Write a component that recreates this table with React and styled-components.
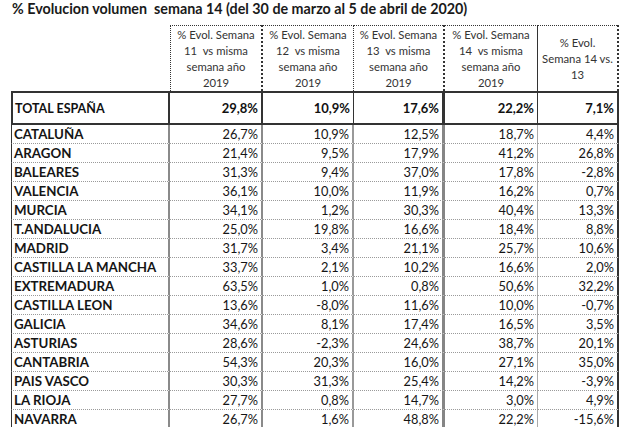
import React from "react";
import styled, { createGlobalStyle } from "styled-components";

const Global = createGlobalStyle`
  html, body { margin: 0; padding: 0; background: #fff; }
  body { width: 636px; height: 427px; overflow: hidden; font-family: Lato, "Open Sans", sans-serif; color: #111; }
`;

const Page = styled.div`
  width: 636px;
  height: 427px;
  overflow: hidden;
  background: #fff;
`;

const Title = styled.h1`
  margin: 0;
  padding: 0 0 0 12px;
  height: 25px;
  box-sizing: border-box;
  font-family: Lato, sans-serif;
  font-weight: 700;
  font-size: 14.3px;
  line-height: 18px;
  color: #1a1a1a;
  white-space: pre;
`;

const Grid = styled.div`
  display: grid;
  grid-template-columns: 159px 93px 91px 91px 93px 81px;
  margin-left: 11px;
  width: 608px;
`;

const headBorders = [
  null,
  { right: "2px dotted #333", left: "1px dotted #333" },
  { right: "1px dotted #333" },
  { right: "2px dotted #333" },
  { right: "1px solid #333" },
  { right: "2px dotted #333" },
];
const totalBorders = ["2px solid #333", "2px solid #333", "1px solid #333", "3px solid #333", "1px solid #333", "2px solid #333"];
const dataBorders = ["2px solid #8a8a8a", "2px solid #8a8a8a", "2px solid #999", "3px solid #858585", "1px solid #aaa", "2px solid #333"];

const HeadCell = styled.div`
  box-sizing: border-box;
  height: 66px;
  padding-top: 1px;
  ${({ $col }) =>
    $col === 0
      ? ""
      : `border-top: 1px dotted #333; border-right: ${headBorders[$col].right};` +
        (headBorders[$col].left ? `border-left: ${headBorders[$col].left};` : "")}
  display: flex;
  align-items: center;
  justify-content: center;
  text-align: center;
  font-size: 11.3px;
  line-height: 16px;
  color: #333;
`;

const HeadLine = styled.div`
  white-space: pre;
`;

const TotalCell = styled.div`
  box-sizing: border-box;
  height: 34px;
  border-top: 2px solid #333;
  border-bottom: 2px solid #333;
  border-right: ${({ $col }) => totalBorders[$col]};
  ${({ $col }) => ($col === 0 ? "border-left: 2px solid #333;" : "")}
  display: flex;
  align-items: center;
  justify-content: ${({ $col }) => ($col === 0 ? "flex-start" : "flex-end")};
  padding: 0 ${({ $col }) => ($col === 0 ? "0 0 2px" : "3px 0 0")};
  font-weight: 700;
  font-size: ${({ $col }) => ($col === 0 ? "12.5px" : "13px")};
  color: #111;
  white-space: nowrap;
`;

const DataCell = styled.div`
  box-sizing: border-box;
  height: 19px;
  border-bottom: 1px dotted #9a9a9a;
  border-right: ${({ $col }) => dataBorders[$col]};
  ${({ $col }) => ($col === 0 ? "border-left: 1px solid #333;" : "")}
  display: flex;
  align-items: center;
  justify-content: ${({ $col }) => ($col === 0 ? "flex-start" : "flex-end")};
  padding: 0 ${({ $col }) => ($col === 0 ? "0 0 2px" : "3px 0 0")};
  font-weight: ${({ $col }) => ($col === 0 ? 700 : 400)};
  font-size: ${({ $col }) => ($col === 0 ? "13.3px" : "12.8px")};
  color: #151515;
  white-space: nowrap;
`;

const headers = [
  "",
  ["% Evol. Semana", "11  vs misma", "semana año", "2019"],
  ["% Evol. Semana", "12  vs misma", "semana año", "2019"],
  ["% Evol. Semana", "13  vs misma", "semana año", "2019"],
  ["% Evol. Semana", "14  vs misma", "semana año", "2019"],
  ["% Evol.", "Semana 14 vs.", "13"],
];

const total = ["TOTAL ESPAÑA", "29,8%", "10,9%", "17,6%", "22,2%", "7,1%"];

const rows = [
  ["CATALUÑA", "26,7%", "10,9%", "12,5%", "18,7%", "4,4%"],
  ["ARAGON", "21,4%", "9,5%", "17,9%", "41,2%", "26,8%"],
  ["BALEARES", "31,3%", "9,4%", "37,0%", "17,8%", "-2,8%"],
  ["VALENCIA", "36,1%", "10,0%", "11,9%", "16,2%", "0,7%"],
  ["MURCIA", "34,1%", "1,2%", "30,3%", "40,4%", "13,3%"],
  ["T.ANDALUCIA", "25,0%", "19,8%", "16,6%", "18,4%", "8,8%"],
  ["MADRID", "31,7%", "3,4%", "21,1%", "25,7%", "10,6%"],
  ["CASTILLA LA MANCHA", "33,7%", "2,1%", "10,2%", "16,6%", "2,0%"],
  ["EXTREMADURA", "63,5%", "1,0%", "0,8%", "50,6%", "32,2%"],
  ["CASTILLA LEON", "13,6%", "-8,0%", "11,6%", "10,0%", "-0,7%"],
  ["GALICIA", "34,6%", "8,1%", "17,4%", "16,5%", "3,5%"],
  ["ASTURIAS", "28,6%", "-2,3%", "24,6%", "38,7%", "20,1%"],
  ["CANTABRIA", "54,3%", "20,3%", "16,0%", "27,1%", "35,0%"],
  ["PAIS VASCO", "30,3%", "31,3%", "25,4%", "14,2%", "-3,9%"],
  ["LA RIOJA", "27,7%", "0,8%", "14,7%", "3,0%", "4,9%"],
  ["NAVARRA", "26,7%", "1,6%", "48,8%", "22,2%", "-15,6%"],
];

export default function App() {
  return (
    <Page>
      <Global />
      <Title>{"% Evolucion volumen  semana 14 (del 30 de marzo al 5 de abril de 2020)"}</Title>
      <Grid>
        {headers.map((h, i) => (
          <HeadCell key={"h" + i} $col={i}>
            {Array.isArray(h) ? (
              <div>
                {h.map((l, j) => (
                  <HeadLine key={j}>{l}</HeadLine>
                ))}
              </div>
            ) : null}
          </HeadCell>
        ))}
        {total.map((v, i) => (
          <TotalCell key={"t" + i} $col={i}>{v}</TotalCell>
        ))}
        {rows.map((r, ri) =>
          r.map((v, i) => (
            <DataCell key={ri + "-" + i} $col={i}>{v}</DataCell>
          ))
        )}
      </Grid>
    </Page>
  );
}
